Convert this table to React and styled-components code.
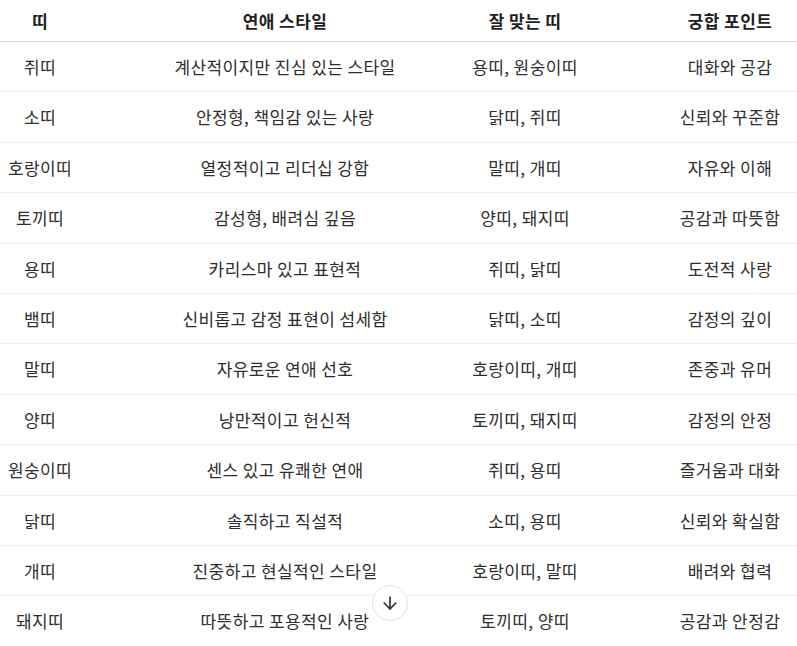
import React from "react";
import styled, { createGlobalStyle } from "styled-components";

const Global = createGlobalStyle`
  html, body { margin: 0; padding: 0; background: #fff; }
  body { font-family: "Noto Sans CJK KR", "Noto Sans", sans-serif; color: #333; overflow: hidden; }
`;

const Page = styled.div`
  position: relative;
  width: 797px;
  height: 646px;
  overflow: hidden;
`;

const Grid = styled.div`
  display: grid;
  grid-template-columns: 100px 370px 110px 1fr;
`;

const Cell = styled.div`
  text-align: center;
  white-space: nowrap;
  font-size: 17px;
  letter-spacing: 0.4px;
  line-height: ${(p) => (p.$head ? "21px" : "21.4px")};
  padding: ${(p) => (p.$head ? "10px" : "14px")} 0;
  padding-left: ${(p) => (p.$col === 3 ? "83px" : "0")};
  padding-right: ${(p) => (p.$col === 0 ? "20px" : "0")};
  font-weight: ${(p) => (p.$head ? 700 : 400)};
  color: ${(p) => (p.$head ? "#1f1f1f" : "#2e2e2e")};
  border-bottom: 1px solid ${(p) => (p.$head ? "#dcdcdc" : "#eeeeee")};
`;

const ScrollButton = styled.button`
  position: absolute;
  left: 50%;
  margin-left: -27px;
  top: 585px;
  width: 36px;
  height: 36px;
  border-radius: 50%;
  border: 1px solid #e3e3e3;
  background: #fff;
  display: flex;
  align-items: center;
  justify-content: center;
  padding: 0;
  color: #333;
  cursor: pointer;
`;

const head = ["띠", "연애 스타일", "잘 맞는 띠", "궁합 포인트"];
const rows = [
  ["쥐띠", "계산적이지만 진심 있는 스타일", "용띠, 원숭이띠", "대화와 공감"],
  ["소띠", "안정형, 책임감 있는 사랑", "닭띠, 쥐띠", "신뢰와 꾸준함"],
  ["호랑이띠", "열정적이고 리더십 강함", "말띠, 개띠", "자유와 이해"],
  ["토끼띠", "감성형, 배려심 깊음", "양띠, 돼지띠", "공감과 따뜻함"],
  ["용띠", "카리스마 있고 표현적", "쥐띠, 닭띠", "도전적 사랑"],
  ["뱀띠", "신비롭고 감정 표현이 섬세함", "닭띠, 소띠", "감정의 깊이"],
  ["말띠", "자유로운 연애 선호", "호랑이띠, 개띠", "존중과 유머"],
  ["양띠", "낭만적이고 헌신적", "토끼띠, 돼지띠", "감정의 안정"],
  ["원숭이띠", "센스 있고 유쾌한 연애", "쥐띠, 용띠", "즐거움과 대화"],
  ["닭띠", "솔직하고 직설적", "소띠, 용띠", "신뢰와 확실함"],
  ["개띠", "진중하고 현실적인 스타일", "호랑이띠, 말띠", "배려와 협력"],
  ["돼지띠", "따뜻하고 포용적인 사랑", "토끼띠, 양띠", "공감과 안정감"],
];

export default function App() {
  return (
    <Page>
      <Global />
      <Grid>
        {head.map((h, i) => (
          <Cell key={h} $head $col={i}>{h}</Cell>
        ))}
        {rows.map((r) =>
          r.map((c, i) => (
            <Cell key={r[0] + i} $col={i}>{c}</Cell>
          ))
        )}
      </Grid>
      <ScrollButton aria-label="scroll down">
        <svg width="20" height="20" viewBox="0 0 24 24" fill="none" stroke="currentColor" strokeWidth="2" strokeLinecap="round" strokeLinejoin="round">
          <path d="M12 5v14" />
          <path d="m19 12-7 7-7-7" />
        </svg>
      </ScrollButton>
    </Page>
  );
}
